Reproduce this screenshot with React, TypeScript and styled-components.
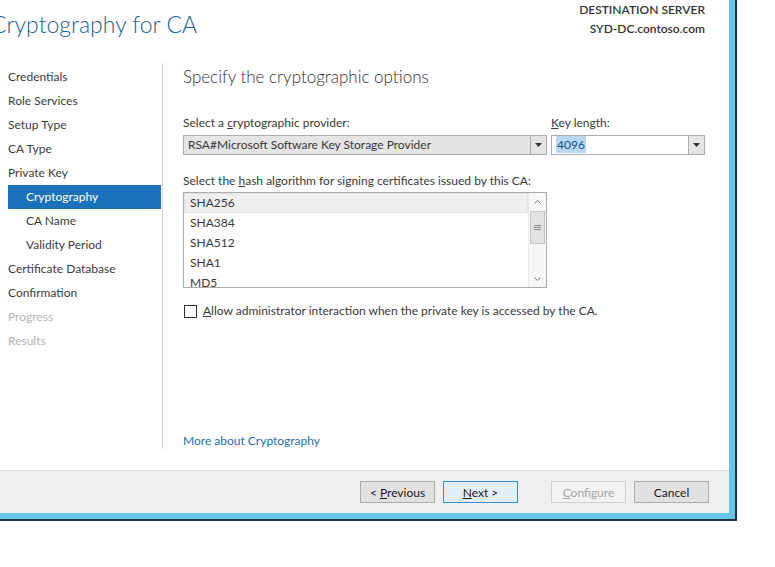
import styled, { createGlobalStyle, css } from "styled-components";

// ── Global ────────────────────────────────────────────────

const GlobalStyle = createGlobalStyle`
  html, body {
    margin: 0;
    padding: 0;
    background: #ffffff;
  }
  body {
    font-family: Lato, "Noto Sans", sans-serif;
    font-size: 12px;
    color: #383838;
  }
`;

// ── Window frame ──────────────────────────────────────────

const Frame = styled.div`
  width: 737px;
  height: 521px;
  box-sizing: border-box;
  border-right: 2px solid #1f3447;
  border-bottom: 2px solid #1f3447;
  overflow: hidden;
`;

const Window = styled.div`
  height: 100%;
  box-sizing: border-box;
  border-right: 6px solid #66c6e8;
  border-bottom: 6px solid #66c6e8;
  display: flex;
  flex-direction: column;
  background: #ffffff;
`;

// ── Header ────────────────────────────────────────────────

const Header = styled.div`
  height: 63px;
  flex: none;
  display: flex;
  justify-content: space-between;
  align-items: flex-start;
  padding-right: 24px;
`;

const Title = styled.h1`
  margin: 9px 0 0 -9px;
  font-size: 23px;
  line-height: 30px;
  font-weight: 300;
  color: #1f5c8f;
  white-space: nowrap;
`;

const Destination = styled.div`
  text-align: right;
  line-height: 19px;
  font-weight: 600;
  color: #333333;
`;

// ── Main area ─────────────────────────────────────────────

const Main = styled.div`
  height: 386px;
  flex: none;
  display: flex;
`;

const Nav = styled.nav`
  width: 163px;
  flex: none;
  box-sizing: border-box;
  border-right: 1px solid #d6d6d6;
  padding: 2px 1px 0 8px;
`;

const NavItem = styled.div<{ $sub?: boolean; $active?: boolean; $disabled?: boolean }>`
  height: 24px;
  line-height: 24px;
  padding-left: ${(p) => (p.$sub ? 18 : 0)}px;
  color: ${(p) => (p.$disabled ? "#b4b4b4" : "#3c3c3c")};
  white-space: nowrap;
  ${(p) =>
    p.$active &&
    css`
      background: #1a72bb;
      color: #ffffff;
    `}
`;

const Content = styled.div`
  flex: 1;
  padding-left: 20px;
  display: flex;
  flex-direction: column;
`;

const Heading = styled.h2`
  margin: 2px 0 0;
  font-size: 17px;
  line-height: 24px;
  font-weight: 300;
  color: #333333;
`;

const Label = styled.div`
  line-height: 16px;
  white-space: nowrap;
`;

const ComboRow = styled.div`
  margin-top: 26px;
  display: flex;
  gap: 4px;
`;

const Field = styled.div<{ $width: number }>`
  width: ${(p) => p.$width}px;
  display: flex;
  flex-direction: column;
  gap: 4px;
`;

const Combo = styled.div<{ $readonly?: boolean }>`
  height: 20px;
  box-sizing: border-box;
  border: 1px solid #acacac;
  background: ${(p) => (p.$readonly ? "#e5e5e5" : "#ffffff")};
  display: flex;
  align-items: stretch;
`;

const ComboValue = styled.div`
  flex: 1;
  padding-left: 4px;
  line-height: 18px;
  white-space: nowrap;
  overflow: hidden;
`;

const Selected = styled.span`
  background: #b9d7f3;
  color: #1c4f8f;
  padding: 1px 1px;
`;

const ComboArrow = styled.div`
  width: 15px;
  border-left: 1px solid #acacac;
  background: #e5e5e5;
  display: flex;
  align-items: center;
  justify-content: center;
`;

const HashLabel = styled(Label)`
  margin-top: 18px;
`;

const ListBox = styled.div`
  margin-top: 3px;
  width: 364px;
  height: 96px;
  box-sizing: border-box;
  border: 1px solid #acacac;
  display: flex;
  overflow: hidden;
`;

const Rows = styled.div`
  flex: 1;
  overflow: hidden;
`;

const Row = styled.div<{ $selected?: boolean }>`
  height: 20px;
  line-height: 20px;
  padding-left: 6px;
  ${(p) =>
    p.$selected &&
    css`
      background: #efefef;
      box-shadow: inset 0 0 0 1px #e2e2e2;
    `}
`;

const ScrollBar = styled.div`
  width: 17px;
  flex: none;
  background: #f7f7f7;
  border-left: 1px solid #ececec;
  display: flex;
  flex-direction: column;
`;

const ScrollButton = styled.div`
  height: 17px;
  display: flex;
  align-items: center;
  justify-content: center;
`;

const Thumb = styled.div`
  margin: 1px 1px 0;
  height: 31px;
  background: #e2e2e2;
  border: 1px solid #c6c6c6;
  display: flex;
  align-items: center;
  justify-content: center;
`;

const Track = styled.div`
  flex: 1;
`;

const CheckRow = styled.label`
  margin-top: 15px;
  display: flex;
  align-items: center;
  gap: 6px;
  line-height: 16px;
  padding-left: 1px;
`;

const CheckBox = styled.span`
  width: 13px;
  height: 13px;
  box-sizing: border-box;
  border: 1px solid #333333;
  background: #ffffff;
`;

const MoreLink = styled.a`
  margin-top: auto;
  line-height: 16px;
  color: #2a6ea8;
  text-decoration: none;
`;

// ── Footer ────────────────────────────────────────────────

const Footer = styled.div`
  margin-top: auto;
  height: 43px;
  flex: none;
  box-sizing: border-box;
  border-top: 1px solid #dcdcdc;
  background: #f0f0f0;
  display: flex;
  justify-content: flex-end;
  align-items: flex-start;
  padding: 10px 20px 0 0;
`;

const Button = styled.button<{ $primary?: boolean; $gap?: number }>`
  width: 75px;
  height: 22px;
  margin-left: ${(p) => p.$gap ?? 8}px;
  box-sizing: border-box;
  border: 1px solid ${(p) => (p.$primary ? "#3c8ccb" : "#adadad")};
  background: ${(p) => (p.$primary ? "#e5eef7" : "#e1e1e1")};
  font-family: inherit;
  font-size: 12px;
  color: #1a1a1a;
  padding: 0;
  &:disabled {
    background: #f3f3f3;
    border-color: #cfcfcf;
    color: #a6a6a6;
  }
`;

// ── Icons ─────────────────────────────────────────────────

const DownTriangle = () => (
  <svg width="7" height="4" viewBox="0 0 7 4">
    <path d="M0 0h7L3.5 4z" fill="#333" />
  </svg>
);

const Chevron = ({ up }: { up?: boolean }) => (
  <svg width="7" height="4" viewBox="0 0 7 4">
    <path
      d={up ? "M0.5 3.5L3.5 0.5L6.5 3.5" : "M0.5 0.5L3.5 3.5L6.5 0.5"}
      stroke="#7a7a7a"
      fill="none"
    />
  </svg>
);

const Grip = () => (
  <svg width="7" height="6" viewBox="0 0 7 6">
    <path d="M0 0.5h7M0 2.5h7M0 4.5h7" stroke="#8a8a8a" />
  </svg>
);

// ── Component ─────────────────────────────────────────────

const navItems = [
  { label: "Credentials" },
  { label: "Role Services" },
  { label: "Setup Type" },
  { label: "CA Type" },
  { label: "Private Key" },
  { label: "Cryptography", sub: true, active: true },
  { label: "CA Name", sub: true },
  { label: "Validity Period", sub: true },
  { label: "Certificate Database" },
  { label: "Confirmation" },
  { label: "Progress", disabled: true },
  { label: "Results", disabled: true },
];

const hashes = ["SHA256", "SHA384", "SHA512", "SHA1", "MD5"];

export default function App() {
  return (
    <>
      <GlobalStyle />
      <Frame>
        <Window>
          <Header>
            <Title>Cryptography for CA</Title>
            <Destination>
              <div>DESTINATION SERVER</div>
              <div>SYD-DC.contoso.com</div>
            </Destination>
          </Header>

          <Main>
            <Nav>
              {navItems.map((n) => (
                <NavItem
                  key={n.label}
                  $sub={n.sub}
                  $active={n.active}
                  $disabled={n.disabled}
                >
                  {n.label}
                </NavItem>
              ))}
            </Nav>

            <Content>
              <Heading>Specify the cryptographic options</Heading>

              <ComboRow>
                <Field $width={364}>
                  <Label>
                    Select a <u>c</u>ryptographic provider:
                  </Label>
                  <Combo $readonly>
                    <ComboValue>RSA#Microsoft Software Key Storage Provider</ComboValue>
                    <ComboArrow>
                      <DownTriangle />
                    </ComboArrow>
                  </Combo>
                </Field>
                <Field $width={154}>
                  <Label>
                    <u>K</u>ey length:
                  </Label>
                  <Combo>
                    <ComboValue>
                      <Selected>4096</Selected>
                    </ComboValue>
                    <ComboArrow>
                      <DownTriangle />
                    </ComboArrow>
                  </Combo>
                </Field>
              </ComboRow>

              <HashLabel>
                Select the <u>h</u>ash algorithm for signing certificates issued by this CA:
              </HashLabel>
              <ListBox>
                <Rows>
                  {hashes.map((h, i) => (
                    <Row key={h} $selected={i === 0}>
                      {h}
                    </Row>
                  ))}
                </Rows>
                <ScrollBar>
                  <ScrollButton>
                    <Chevron up />
                  </ScrollButton>
                  <Thumb>
                    <Grip />
                  </Thumb>
                  <Track />
                  <ScrollButton>
                    <Chevron />
                  </ScrollButton>
                </ScrollBar>
              </ListBox>

              <CheckRow>
                <CheckBox />
                <span>
                  <u>A</u>llow administrator interaction when the private key is accessed by the CA.
                </span>
              </CheckRow>

              <MoreLink href="#">More about Cryptography</MoreLink>
            </Content>
          </Main>

          <Footer>
            <Button>
              &lt; <u>P</u>revious
            </Button>
            <Button $primary>
              <u>N</u>ext &gt;
            </Button>
            <Button $gap={33} disabled>
              <u>C</u>onfigure
            </Button>
            <Button>Cancel</Button>
          </Footer>
        </Window>
      </Frame>
    </>
  );
}
